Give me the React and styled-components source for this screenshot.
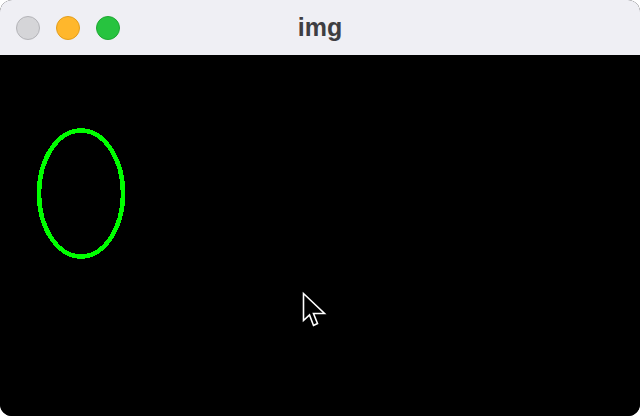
import styled, { createGlobalStyle } from 'styled-components'

const Global = createGlobalStyle`
  html, body {
    margin: 0;
    padding: 0;
    background: #ffffff;
  }
  body {
    font-family: 'Liberation Sans', Arial, sans-serif;
  }
`

const Window = styled.div`
  width: 640px;
  height: 416px;
  display: flex;
  flex-direction: column;
  border-radius: 12px;
  overflow: hidden;
  background: #000;
`

const TitleBar = styled.div`
  height: 55px;
  flex: none;
  display: grid;
  grid-template-columns: 1fr auto 1fr;
  align-items: center;
  background: #efeff4;
  padding: 0 16px;
`

const Lights = styled.div`
  display: flex;
  gap: 16px;
`

const Light = styled.span`
  width: 24px;
  height: 24px;
  border-radius: 50%;
  box-sizing: border-box;
  background: ${p => p.$fill};
  border: 1px solid ${p => p.$edge};
`

const Title = styled.div`
  font-family: 'Liberation Sans', Arial, sans-serif;
  font-weight: 700;
  font-size: 25px;
  color: #3e3e42;
  margin-top: -1px;
`

const Canvas = styled.div`
  flex: 1;
  background: #000;
`

const Drawing = styled.svg`
  display: block;
`

const App = () => (
  <>
    <Global />
    <Window>
      <TitleBar>
        <Lights>
          <Light $fill="#d5d5d8" $edge="#b4b4b8" />
          <Light $fill="#ffb72c" $edge="#e39e1c" />
          <Light $fill="#27c33f" $edge="#1ea832" />
        </Lights>
        <Title>img</Title>
        <span />
      </TitleBar>
      <Canvas>
        <Drawing width="640" height="361" viewBox="0 55 640 361">
          <ellipse
            cx="81"
            cy="193.5"
            rx="42"
            ry="63"
            fill="none"
            stroke="#00ff00"
            strokeWidth="4.5"
            shapeRendering="crispEdges"
          />
          <path
            d="M303.5 293.5 L303.5 320.5 L309.5 315 L313.5 325.5 L317.5 323.5 L313.5 313.5 L324.5 313.5 Z"
            fill="#000"
            stroke="#fff"
            strokeWidth="1.6"
            strokeLinejoin="miter"
          />
        </Drawing>
      </Canvas>
    </Window>
  </>
)

export default App
